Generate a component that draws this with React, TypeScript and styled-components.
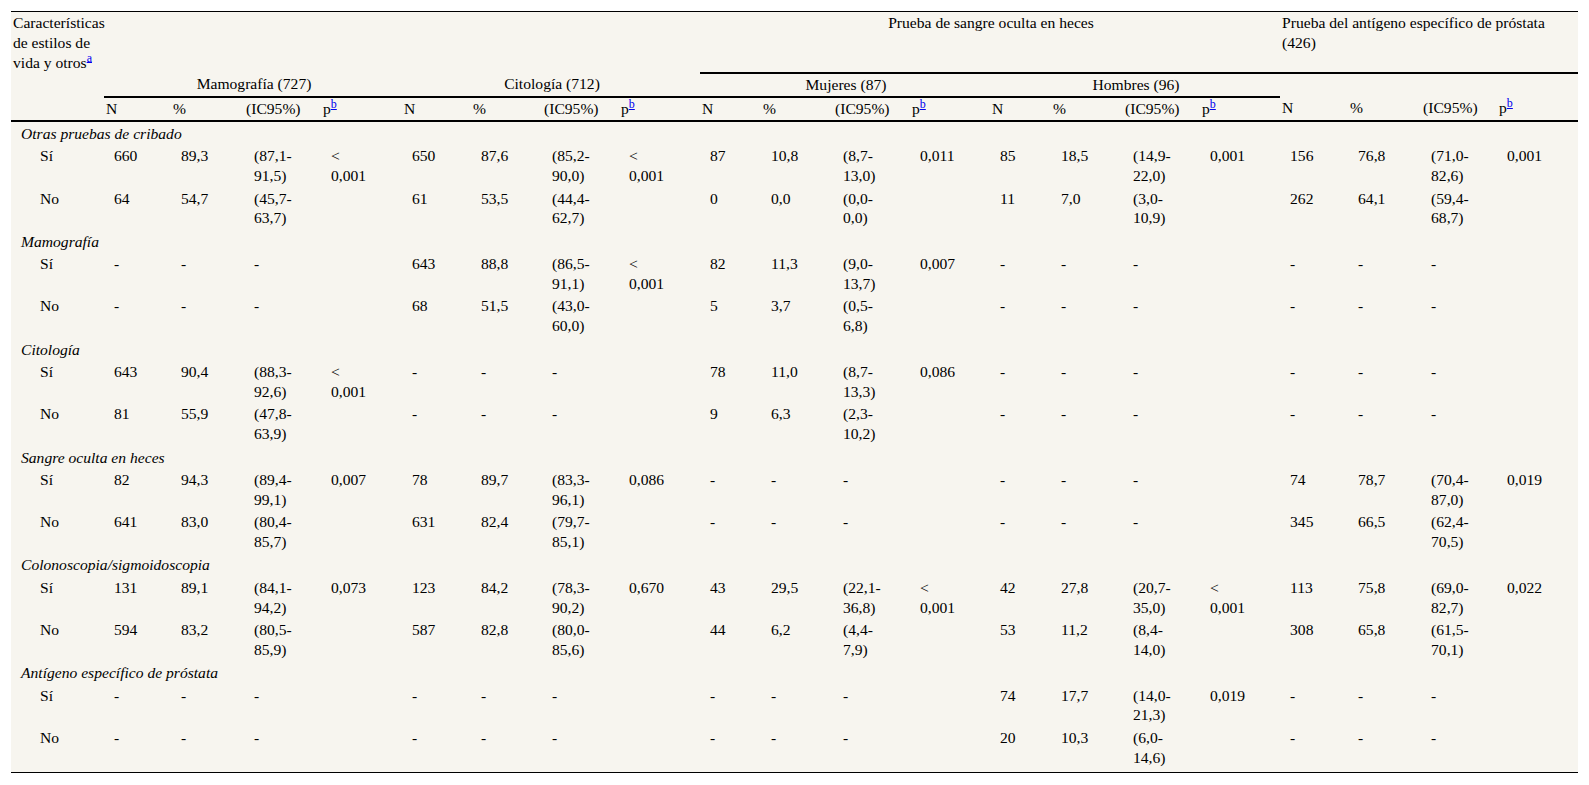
import React from "react";
import styled, { createGlobalStyle } from "styled-components";

const GlobalStyle = createGlobalStyle`
  html, body {
    margin: 0;
    padding: 0;
    background: #ffffff;
  }
  body {
    font-family: "Liberation Serif", "Times New Roman", serif;
  }
`;

const Page = styled.div`
  padding: 11px 11px 0 11px;
`;

const Table = styled.table`
  width: 100%;
  table-layout: fixed;
  border-collapse: collapse;
  background: #f7f5ef;
  color: #000;
  font-family: "Liberation Serif", "Times New Roman", serif;
  font-size: 15.6px;
  line-height: 19.8px;
  border-top: 1px solid #000;
  border-bottom: 1px solid #000;
`;

const HeadCell = styled.th<{ $align?: "left" | "center"; $rule?: boolean }>`
  padding: 1px 0 1px 2px;
  font-weight: normal;
  text-align: ${(p) => p.$align ?? "left"};
  vertical-align: top;
  border-bottom: ${(p) => (p.$rule ? "2px solid #000" : "none")};
`;

const WideHead = styled(HeadCell)`
  padding-right: 8px;
`;

const Note = styled.a`
  color: #0000ee;
  text-decoration: underline;
  font-size: 12px;
  vertical-align: super;
  line-height: 0;
`;

const Cell = styled.td<{ $last?: boolean }>`
  padding: 1px 0 ${(p) => (p.$last ? "4.5px" : "1.7px")} 10px;
  vertical-align: top;
  text-align: left;
`;

const Label = styled(Cell)`
  padding-left: 29px;
`;

const Section = styled.td`
  padding: 2px 0 1.5px 10px;
  font-style: italic;
  vertical-align: top;
`;

const widths = [
  93, 67, 73, 77, 81, 69, 71, 77, 81, 61, 72, 77, 80, 61, 72, 77, 80, 68, 73, 76, 81,
];

const blocks: { title: string; rows: string[][] }[] = [
  {
    title: "Otras pruebas de cribado",
    rows: [
      ["Sí", "660 89,3 87,1-91,5 <0,001", "650 87,6 85,2-90,0 <0,001", "87 10,8 8,7-13,0 0,011", "85 18,5 14,9-22,0 0,001", "156 76,8 71,0-82,6 0,001"],
      ["No", "64 54,7 45,7-63,7", "61 53,5 44,4-62,7", "0 0,0 0,0-0,0", "11 7,0 3,0-10,9", "262 64,1 59,4-68,7"],
    ],
  },
  {
    title: "Mamografía",
    rows: [
      ["Sí", "- - -", "643 88,8 86,5-91,1 <0,001", "82 11,3 9,0-13,7 0,007", "- - -", "- - -"],
      ["No", "- - -", "68 51,5 43,0-60,0", "5 3,7 0,5-6,8", "- - -", "- - -"],
    ],
  },
  {
    title: "Citología",
    rows: [
      ["Sí", "643 90,4 88,3-92,6 <0,001", "- - -", "78 11,0 8,7-13,3 0,086", "- - -", "- - -"],
      ["No", "81 55,9 47,8-63,9", "- - -", "9 6,3 2,3-10,2", "- - -", "- - -"],
    ],
  },
  {
    title: "Sangre oculta en heces",
    rows: [
      ["Sí", "82 94,3 89,4-99,1 0,007", "78 89,7 83,3-96,1 0,086", "- - -", "- - -", "74 78,7 70,4-87,0 0,019"],
      ["No", "641 83,0 80,4-85,7", "631 82,4 79,7-85,1", "- - -", "- - -", "345 66,5 62,4-70,5"],
    ],
  },
  {
    title: "Colonoscopia/sigmoidoscopia",
    rows: [
      ["Sí", "131 89,1 84,1-94,2 0,073", "123 84,2 78,3-90,2 0,670", "43 29,5 22,1-36,8 <0,001", "42 27,8 20,7-35,0 <0,001", "113 75,8 69,0-82,7 0,022"],
      ["No", "594 83,2 80,5-85,9", "587 82,8 80,0-85,6", "44 6,2 4,4-7,9", "53 11,2 8,4-14,0", "308 65,8 61,5-70,1"],
    ],
  },
  {
    title: "Antígeno específico de próstata",
    rows: [
      ["Sí", "- - -", "- - -", "- - -", "74 17,7 14,0-21,3 0,019", "- - -"],
      ["No", "- - -", "- - -", "- - -", "20 10,3 6,0-14,6", "- - -"],
    ],
  },
];

function Interval({ value }: { value: string }) {
  if (value === "-") return <>-</>;
  const [lo, hi] = value.split("-");
  return (
    <>
      ({lo}-<br />
      {hi})
    </>
  );
}

function PValue({ value }: { value?: string }) {
  if (!value) return null;
  if (value.startsWith("<")) {
    return (
      <>
        &lt;
        <br />
        {value.slice(1)}
      </>
    );
  }
  return <>{value}</>;
}

function Group({ data, last }: { data: string; last?: boolean }) {
  const [n, pct, ci, p] = data.split(" ");
  return (
    <>
      <Cell $last={last}>{n}</Cell>
      <Cell $last={last}>{pct}</Cell>
      <Cell $last={last}>
        <Interval value={ci} />
      </Cell>
      <Cell $last={last}>
        <PValue value={p} />
      </Cell>
    </>
  );
}

const P = () => (
  <>
    p<Note href="#b">b</Note>
  </>
);

export default function App() {
  const subHeads = ["N", "%", "(IC95%)"];
  return (
    <Page>
      <GlobalStyle />
      <Table>
        <colgroup>
          {widths.map((w, i) => (
            <col key={i} style={{ width: w }} />
          ))}
        </colgroup>
        <thead>
          <tr>
            <HeadCell>
              Características de estilos de vida y otros<Note href="#a">a</Note>
            </HeadCell>
            <HeadCell colSpan={8} />
            <HeadCell colSpan={8} $align="center" $rule>
              Prueba de sangre oculta en heces
            </HeadCell>
            <WideHead colSpan={4} $rule>
              Prueba del antígeno específico de próstata (426)
            </WideHead>
          </tr>
          <tr>
            <HeadCell />
            <HeadCell colSpan={4} $align="center" $rule>
              Mamografía (727)
            </HeadCell>
            <HeadCell colSpan={4} $align="center" $rule>
              Citología (712)
            </HeadCell>
            <HeadCell colSpan={4} $align="center" $rule>
              Mujeres (87)
            </HeadCell>
            <HeadCell colSpan={4} $align="center" $rule>
              Hombres (96)
            </HeadCell>
            <HeadCell colSpan={4} />
          </tr>
          <tr>
            <HeadCell $rule />
            {Array.from({ length: 5 }).map((_, g) => (
              <React.Fragment key={g}>
                {subHeads.map((h) => (
                  <HeadCell key={h} $rule>
                    {h}
                  </HeadCell>
                ))}
                <HeadCell $rule>
                  <P />
                </HeadCell>
              </React.Fragment>
            ))}
          </tr>
        </thead>
        <tbody>
          {blocks.map((b, bi) => (
            <React.Fragment key={b.title}>
              <tr>
                <Section colSpan={21}>{b.title}</Section>
              </tr>
              {b.rows.map((r, ri) => {
                const last = bi === blocks.length - 1 && ri === b.rows.length - 1;
                return (
                  <tr key={ri}>
                    <Label $last={last}>{r[0]}</Label>
                    {r.slice(1).map((g, gi) => (
                      <Group key={gi} data={g} last={last} />
                    ))}
                  </tr>
                );
              })}
            </React.Fragment>
          ))}
        </tbody>
      </Table>
    </Page>
  );
}
